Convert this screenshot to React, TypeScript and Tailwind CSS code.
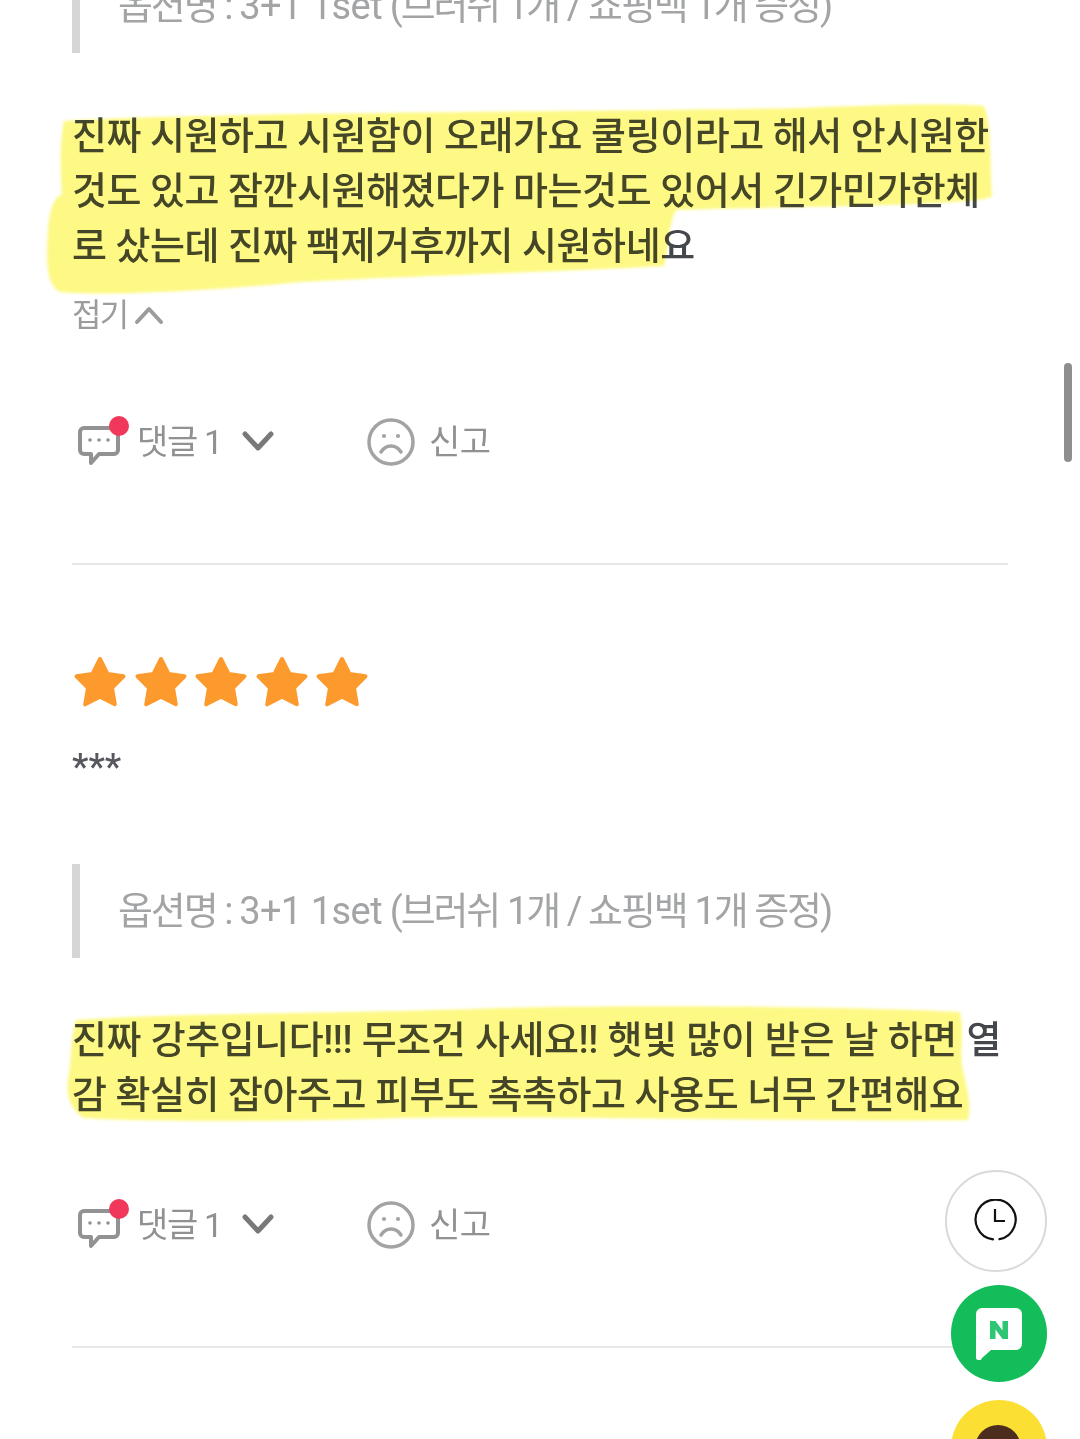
const FONT = "font-['Roboto','Noto_Sans_CJK_KR','Noto_Sans',sans-serif]";

const CommentIcon = () => (
  <span className="relative block w-[56px] h-[52px]">
    <svg width="56" height="52" viewBox="0 0 56 52" fill="none" className="absolute left-0 top-0">
      <path
        d="M6 12h30a4 4 0 0 1 4 4v18a4 4 0 0 1-4 4H21l-8 9v-9H6a4 4 0 0 1-4-4V16a4 4 0 0 1 4-4z"
        stroke="#909294"
        strokeWidth="4"
        strokeLinejoin="round"
      />
      <circle cx="12" cy="24" r="1.800" fill="#909294" />
      <circle cx="21" cy="24" r="1.800" fill="#909294" />
      <circle cx="30" cy="24" r="1.800" fill="#909294" />
    </svg>
    <span className="absolute left-[31px] top-0 w-[20px] h-[20px] rounded-full bg-[#f2385a]" />
  </span>
);

const SadIcon = () => (
  <svg width="48" height="48" viewBox="0 0 48 48" fill="none">
    <circle cx="24" cy="24" r="22" stroke="#a3a3a3" strokeWidth="3.500" />
    <circle cx="17" cy="18" r="2.100" fill="#a3a3a3" />
    <circle cx="31" cy="18" r="2.100" fill="#a3a3a3" />
    <path d="M14 34c2.500-4 6-6 10-6s7.500 2 10 6" stroke="#a3a3a3" strokeWidth="3.500" strokeLinecap="round" />
  </svg>
);

const Actions = () => (
  <div className="flex items-center h-[52px]">
    <CommentIcon />
    <span className="ml-[3px] mr-[1px] w-[82px] text-[34px] tracking-[-1.300px] text-[#8f9193] leading-none whitespace-nowrap">댓글 1</span>
    <svg width="32" height="22" viewBox="0 0 32 22" fill="none" className="ml-[22px]">
      <path d="M3 3l13 14L29 3" stroke="#77797b" strokeWidth="5" strokeLinecap="round" strokeLinejoin="round" />
    </svg>
    <span className="ml-[93px]">
      <SadIcon />
    </span>
    <span className="ml-[14px] text-[34px] tracking-[-0.5px] text-[#8f9193] leading-none">신고</span>
  </div>
);

const Star = () => (
  <svg width="54" height="52" viewBox="0 0 54 52">
    <path
      d="M27 4l7.500 15 16 2.300-11.500 11.500 2.800 16.500L27 41.700 12.200 49.300 15 32.800 3.500 21.300l16-2.300z"
      fill="#fd9a2d"
      stroke="#fd9a2d"
      strokeWidth="4"
      strokeLinejoin="round"
    />
  </svg>
);

const OptionLine = () => (
  <div className="flex items-center h-[94px] border-l-[8px] border-[#d5d7d7] pl-[38px] text-[38px] tracking-[-2.100px] [word-spacing:0.4px] text-[#a2a4a6] whitespace-nowrap">
    <span>
      옵션명 : <span className="tracking-[-0.6px]">3+1 1set</span> (브러쉬 1개 / 쇼핑백 1개 증정)
    </span>
  </div>
);

const ReviewLine = ({ text, wide }: { text: string; wide?: boolean }) => (
  <p className={wide ? '[word-spacing:0.7px]' : ''}>{text}</p>
);

export default function App() {
  return (
    <div className={`${FONT} relative w-[1080px] h-[1439px] overflow-hidden bg-white`}>
      <div className="px-[72px] -mt-[41px]">
        <OptionLine />
        <div className="mt-[56px] text-[38px] leading-[55px] tracking-[-0.45px] text-[#44474b] font-medium whitespace-nowrap">
          <ReviewLine text="진짜 시원하고 시원함이 오래가요 쿨링이라고 해서 안시원한" />
          <ReviewLine text="것도 있고 잠깐시원해졌다가 마는것도 있어서 긴가민가한체" />
          <ReviewLine text="로 샀는데 진짜 팩제거후까지 시원하네요" />
        </div>
        <div className="mt-[16px] flex items-center h-[50px] text-[32px] text-[#9a9c9e] tracking-[-1.800px]">
          접기
          <svg width="30" height="20" viewBox="0 0 30 20" fill="none" className="ml-[7px]">
            <path d="M3 17L15 4l12 13" stroke="#9a9c9e" strokeWidth="4" strokeLinecap="round" strokeLinejoin="round" />
          </svg>
        </div>
        <div className="mt-[76px] pl-[6px]">
          <Actions />
        </div>
        <div className="mt-[95px] border-t-2 border-[#e6e7e8]" />

        <div className="mt-[90px] flex gap-[6.600px] pl-[1px]">
          {[0, 1, 2, 3, 4].map((i) => (
            <Star key={i} />
          ))}
        </div>
        <div className="mt-[35px] h-[50px] text-[37px] font-medium leading-[50px] text-[#55585c]">***</div>

        <div className="mt-[72px]">
          <OptionLine />
        </div>
        <div className="mt-[55px] text-[38px] leading-[55px] tracking-[-0.45px] text-[#44474b] font-medium whitespace-nowrap">
          <ReviewLine wide text="진짜 강추입니다!!! 무조건 사세요!! 햇빛 많이 받은 날 하면 열" />
          <ReviewLine text="감 확실히 잡아주고 피부도 촉촉하고 사용도 너무 간편해요" />
        </div>
        <div className="mt-[76px] pl-[6px]">
          <Actions />
        </div>
        <div className="mt-[95px] border-t-2 border-[#e6e7e8]" />
      </div>

      {/* highlighter marks drawn over the text */}
      <svg
        width="1080"
        height="1439"
        viewBox="0 0 1080 1439"
        className="absolute left-0 top-0 pointer-events-none mix-blend-multiply blur-[1.5px]"
      >
        <path
          d="M64 121C200 112 600 112 800 108C880 105 950 103 984 106C992 125 990 170 992 196C985 206 800 206 676 210C668 225 668 250 664 266C560 272 400 276 300 282C200 292 100 296 60 292C46 285 46 260 48 230C50 210 52 200 62 194C60 170 60 140 64 121Z"
          fill="#fdf984"
        />
        <path
          d="M76 1020C200 1012 340 1014 500 1008C700 1004 880 1008 960 1012C964 1030 960 1050 962 1066C966 1085 972 1105 968 1120C800 1122 600 1116 400 1118C280 1122 140 1122 84 1118C70 1110 66 1095 68 1080C72 1060 70 1040 76 1020Z"
          fill="#fdf984"
        />
      </svg>

      <div className="absolute right-[8px] top-[363px] w-[8px] h-[99px] rounded-full bg-[#8e8e8e]" />

      {/* floating buttons */}
      <div className="absolute left-[945px] top-[1170px] w-[102px] h-[102px] rounded-full bg-white border-2 border-[#d9d9d9] flex items-center justify-center">
        <svg width="44" height="44" viewBox="0 0 44 44" fill="none">
          <path d="M19 40.400A20 20 0 1 1 25.500 40.200" stroke="#111" strokeWidth="2.200" strokeLinecap="round" />
          <path d="M21 10v12h10" stroke="#111" strokeWidth="2.200" />
        </svg>
      </div>
      <div className="absolute left-[951px] top-[1285px] w-[96px] h-[97px] rounded-full bg-[#13bd5a] flex items-center justify-center">
        <svg width="46" height="52" viewBox="0 0 46 52" className="mt-[1px]">
          <path
            d="M6 0h34a6 6 0 0 1 6 6v30a6 6 0 0 1-6 6H15L6 50a3 3 0 0 1-6-2V6a6 6 0 0 1 6-6z"
            fill="#fff"
          />
          <path d="M14 13h5.500l7 9.500V13H32v18h-5.500l-7-9.500V31H14z" fill="#2ec672" />
        </svg>
      </div>
      <div className="absolute left-[951px] top-[1400px] w-[96px] h-[96px] rounded-full bg-[#fbdf33] overflow-hidden">
        <div className="absolute left-[24px] top-[25px] w-[46px] h-[46px] rounded-full bg-[#4c2d1e]" />
      </div>
    </div>
  );
}
